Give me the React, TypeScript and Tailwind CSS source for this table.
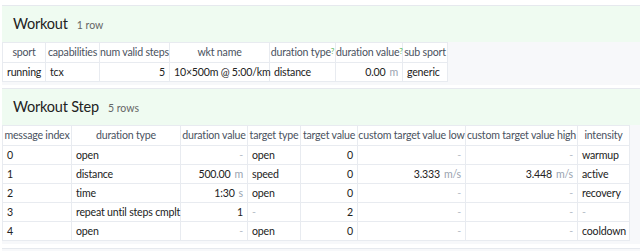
import React from "react"

type Cell = { v: string; unit?: string; align?: "l" | "r"; dim?: boolean }

const font = { fontFamily: 'Lato, "Noto Sans", sans-serif' }

const thClass = "bg-white border border-[#e8ebf0] px-0 h-[20px] font-normal text-[#4a5260] whitespace-nowrap text-center"
const tdClass = "bg-white border border-[#e8ebf0] px-[4px] h-[19px] text-[#222] whitespace-nowrap"

function Help() {
  return <sup className="text-[8px] text-[#5cb85c] relative -top-[2px]">?</sup>
}

function Section({
  title,
  count,
  headers,
  rows,
  widths,
}: {
  title: string
  count: string
  headers: { label: string; help?: boolean }[]
  rows: Cell[][]
  widths: number[]
}) {
  const total = widths.reduce((a, b) => a + b, 0)
  return (
    <div className="border-t border-[#e6e9ee] bg-[#f7f8fa] pb-[3px]">
      <div className="bg-[#effbf1] h-[36px] flex items-center px-[11px] gap-[9px]">
        <span className="text-[14.5px] tracking-[-0.2px] text-[#222] leading-none">{title}</span>
        <span className="text-[10.5px] text-[#666] leading-none mt-[3px]">{count}</span>
      </div>
      <table className="border-collapse table-fixed text-[10.6px] tracking-[-0.2px] leading-none" style={{ width: total }}>
        <colgroup>
          {widths.map((w, i) => (
            <col key={i} style={{ width: w }} />
          ))}
        </colgroup>
        <thead>
          <tr>
            {headers.map((h, i) => (
              <th key={i} className={thClass}>
                {h.label}
                {h.help && <Help />}
              </th>
            ))}
          </tr>
        </thead>
        <tbody>
          {rows.map((r, ri) => (
            <tr key={ri}>
              {r.map((c, ci) => (
                <td key={ci} className={`${tdClass} ${c.align === "r" ? "text-right" : "text-left"}`}>
                  {c.dim ? (
                    <span className="text-[#b8bec8]">-</span>
                  ) : (
                    <>
                      {c.v}
                      {c.unit && <span className="text-[#9aa3b0] ml-1">{c.unit}</span>}
                    </>
                  )}
                </td>
              ))}
            </tr>
          ))}
        </tbody>
      </table>
    </div>
  )
}

const dash: Cell = { v: "-", align: "r", dim: true }

export default function App() {
  return (
    <div className="bg-white w-[640px] h-[251px] overflow-hidden pt-[5px] pl-[2px]" style={font}>
      <Section
        title="Workout"
        count="1 row"
        widths={[43, 54, 70, 100, 66, 67, 45]}
        headers={[
          { label: "sport" },
          { label: "capabilities" },
          { label: "num valid steps" },
          { label: "wkt name" },
          { label: "duration type", help: true },
          { label: "duration value", help: true },
          { label: "sub sport" },
        ]}
        rows={[
          [
            { v: "running" },
            { v: "tcx" },
            { v: "5", align: "r" },
            { v: "10×500m @ 5:00/km" },
            { v: "distance" },
            { v: "0.00", unit: "m", align: "r" },
            { v: "generic" },
          ],
        ]}
      />
      <div className="h-[3px]" />
      <Section
        title="Workout Step"
        count="5 rows"
        widths={[69, 109, 67, 53, 57, 108, 112, 52]}
        headers={[
          { label: "message index" },
          { label: "duration type" },
          { label: "duration value" },
          { label: "target type" },
          { label: "target value" },
          { label: "custom target value low" },
          { label: "custom target value high" },
          { label: "intensity" },
        ]}
        rows={[
          [{ v: "0" }, { v: "open" }, dash, { v: "open" }, { v: "0", align: "r" }, dash, dash, { v: "warmup" }],
          [
            { v: "1" },
            { v: "distance" },
            { v: "500.00", unit: "m", align: "r" },
            { v: "speed" },
            { v: "0", align: "r" },
            { v: "3.333", unit: "m/s", align: "r" },
            { v: "3.448", unit: "m/s", align: "r" },
            { v: "active" },
          ],
          [
            { v: "2" },
            { v: "time" },
            { v: "1:30", unit: "s", align: "r" },
            { v: "open" },
            { v: "0", align: "r" },
            dash,
            dash,
            { v: "recovery" },
          ],
          [
            { v: "3" },
            { v: "repeat until steps cmplt" },
            { v: "1", align: "r" },
            { v: "-", dim: true },
            { v: "2", align: "r" },
            dash,
            dash,
            { v: "-", dim: true },
          ],
          [{ v: "4" }, { v: "open" }, dash, { v: "open" }, { v: "0", align: "r" }, dash, dash, { v: "cooldown" }],
        ]}
      />
      <div className="h-[4px]" />
      <div className="border-t border-[#e6e9ee] bg-[#f7f8fa] h-[20px]" />
    </div>
  )
}
